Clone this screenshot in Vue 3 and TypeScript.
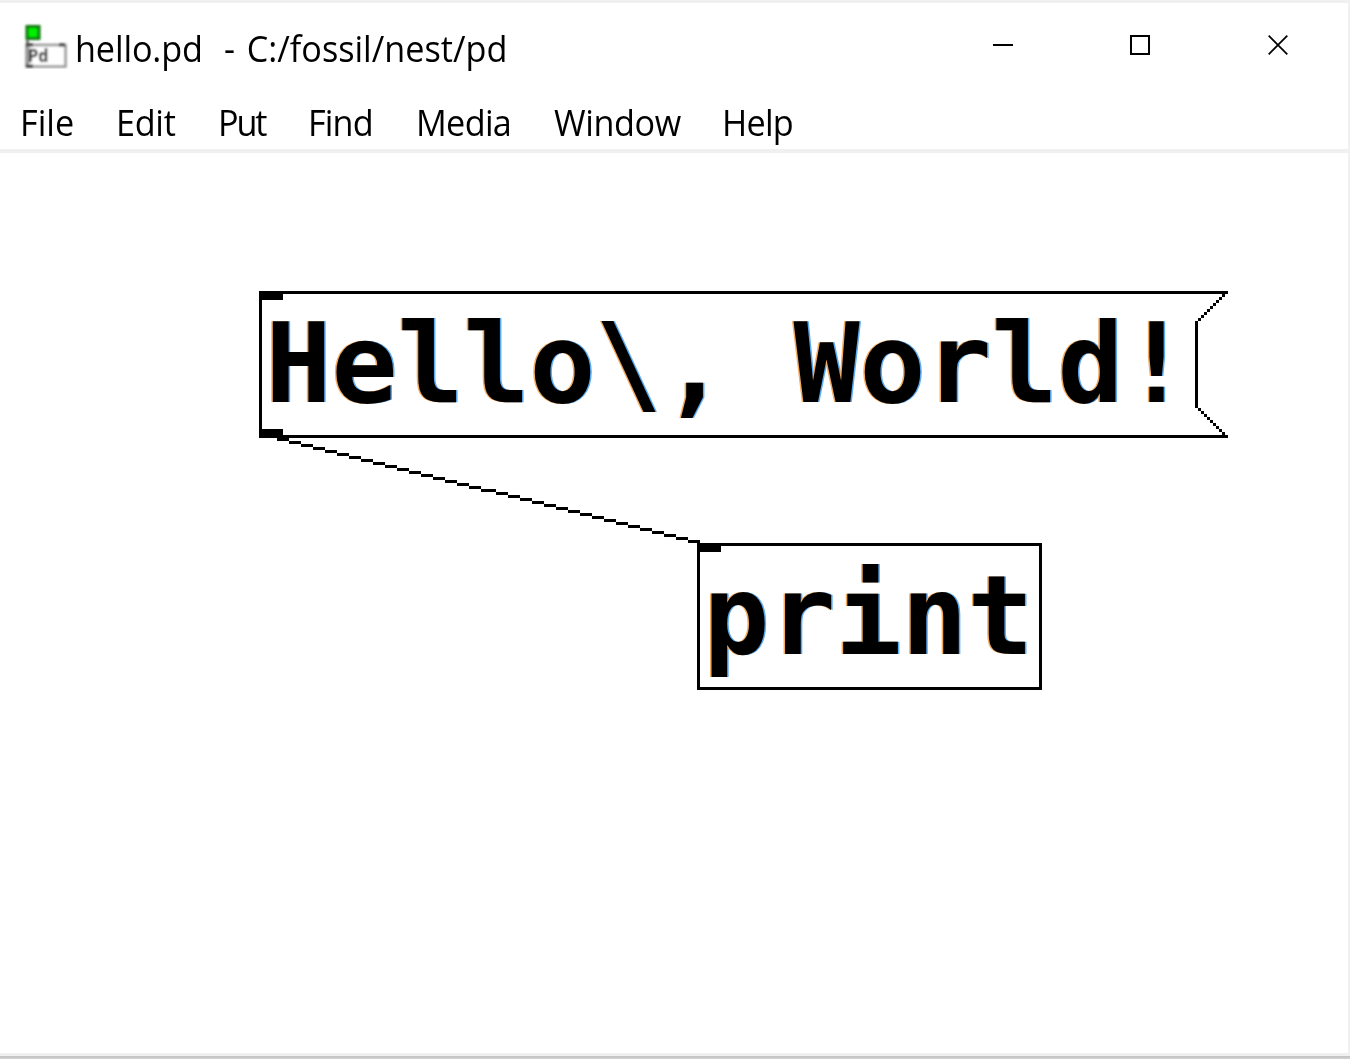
<script setup lang="ts">
interface MenuItem {
  label: string
  width: number
  spacing: number
}

interface Block {
  x: number
  y: number
  w: number
  h: number
}

const menus: MenuItem[] = [
  { label: 'File', width: 95.5, spacing: 0 },
  { label: 'Edit', width: 102, spacing: -0.3 },
  { label: 'Put', width: 90, spacing: -2.3 },
  { label: 'Find', width: 108.5, spacing: -0.9 },
  { label: 'Media', width: 138, spacing: -0.7 },
  { label: 'Window', width: 168, spacing: -0.4 },
  { label: 'Help', width: 90, spacing: -0.8 },
]

// The patch is drawn on a grid of 3px cells.
const cell = 3

const cord: Block[] = []
let cordX = 277
for (let i = 0; i < 35; i++) {
  const w = i === 17 ? 15 : 12
  cord.push({ x: cordX, y: 438 + i * cell, w, h: cell })
  cordX += w
}

const notch: Block[] = []
for (let i = 0; i < 9; i++) {
  notch.push({ x: 1222 - i * cell, y: 294 + i * cell, w: cell, h: cell })
  notch.push({ x: 1198 + i * cell, y: 408 + i * cell, w: cell, h: cell })
}

const blocks: Block[] = [
  // message box
  { x: 259, y: 291, w: 969, h: 3 },
  { x: 259, y: 435, w: 969, h: 3 },
  { x: 259, y: 291, w: 3, h: 147 },
  { x: 1195, y: 321, w: 3, h: 87 },
  { x: 259, y: 291, w: 24, h: 9 },
  { x: 259, y: 429, w: 24, h: 9 },
  ...notch,
  // object box
  { x: 697, y: 543, w: 345, h: 3 },
  { x: 697, y: 687, w: 345, h: 3 },
  { x: 697, y: 543, w: 3, h: 147 },
  { x: 1039, y: 543, w: 3, h: 147 },
  { x: 697, y: 543, w: 24, h: 9 },
  ...cord,
]
</script>

<template>
  <div class="window">
    <header class="titlebar">
      <svg class="app-icon" width="46" height="46" viewBox="0 0 46 46">
        <defs>
          <filter id="soft"><feGaussianBlur stdDeviation="0.9" /></filter>
        </defs>
        <g filter="url(#soft)">
          <rect x="4" y="3.5" width="12" height="12" fill="#00f000" stroke="#087808" stroke-width="3" />
          <path d="M4.5 17v5" stroke="#777" stroke-width="3" />
          <rect x="3.5" y="22" width="39" height="21.5" fill="#fff" stroke="#999" stroke-width="2.6" />
          <path d="M3 22h7M36 22h6M3 43h7" stroke="#333" stroke-width="3" />
          <path d="M5 24v17" stroke="#999" stroke-width="3" />
          <text x="5" y="39" class="icon-text">Pd</text>
        </g>
      </svg>
      <span class="title name">hello.pd</span>
      <span class="title path">- C:/fossil/nest/pd</span>
      <div class="controls">
        <svg width="20" height="20" viewBox="0 0 20 20"><path d="M0 10h20" /></svg>
        <svg width="20" height="20" viewBox="0 0 20 20"><rect x="1" y="1" width="18" height="18" /></svg>
        <svg width="20" height="20" viewBox="0 0 20 20"><path class="cross" d="M.7.7l18.6 18.6M19.3.7L.7 19.3" /></svg>
      </div>
    </header>
    <nav class="menubar">
      <span
        v-for="m in menus"
        :key="m.label"
        class="menu"
        :style="{ width: m.width + 'px', letterSpacing: m.spacing + 'px' }"
      >{{ m.label }}</span>
    </nav>
    <main class="canvas">
      <svg class="wires" width="1348" height="900" viewBox="0 153 1348 900">
        <rect v-for="(b, i) in blocks" :key="i" :x="b.x" :y="b.y" :width="b.w" :height="b.h" />
      </svg>
      <span class="atom message">Hello\, World!</span>
      <span class="atom object">print</span>
    </main>
    <div class="shadow"></div>
  </div>
</template>

<style>
body {
  margin: 0;
  overflow: hidden;
}
</style>

<style scoped>
.window {
  box-sizing: border-box;
  width: 1350px;
  height: 1059px;
  display: flex;
  flex-direction: column;
  border-top: 3px solid #f0f0f0;
  background: #fff;
  color: #000;
  font-family: "Open Sans", "Noto Sans", sans-serif;
  font-size: 36px;
}
.titlebar {
  display: flex;
  height: 94px;
  padding-left: 23px;
  border-right: 2px solid #f0f0f0;
}
.app-icon {
  flex: none;
  margin-top: 20px;
}
.icon-text {
  font: bold 17px "DejaVu Sans Mono", monospace;
  fill: #222;
}
.title {
  line-height: 50px;
  margin-top: 21px;
  white-space: pre;
  transform: scaleX(0.95);
  transform-origin: left;
}
.name {
  width: 149px;
  margin-left: 6px;
  letter-spacing: -0.15px;
}
.path {
  word-spacing: 3px;
}
.controls {
  display: flex;
  gap: 117px;
  margin: 32px 60px 0 auto;
}
.controls svg {
  fill: none;
  stroke: #000;
  stroke-width: 2;
}
.controls svg:last-child {
  margin-left: 1px;
}
.controls .cross {
  stroke-width: 1.8;
}
.menubar {
  box-sizing: border-box;
  display: flex;
  height: 56px;
  padding-left: 20px;
  border-right: 2px solid #f0f0f0;
  border-bottom: 4px solid #f0f0f0;
}
.menu {
  flex: none;
  line-height: 52px;
  white-space: nowrap;
  transform: scaleX(0.95);
  transform-origin: left;
}
.canvas {
  position: relative;
  height: 900px;
  border-right: 2px solid #f0f0f0;
  border-bottom: 3px solid #f0f0f0;
}
.wires {
  display: block;
  shape-rendering: crispEdges;
}
.atom {
  position: absolute;
  font: bold 109.63px/120px "DejaVu Sans Mono", monospace;
  white-space: pre;
  text-shadow: -1.5px 0 #f5ab5e, 1.5px 0 #5aabf5;
}
.message {
  left: 265.5px;
  top: 151px;
}
.object {
  left: 703.5px;
  top: 403px;
}
.shadow {
  height: 3px;
  background: linear-gradient(#c2c2c2, #d2d2d2);
}
</style>
